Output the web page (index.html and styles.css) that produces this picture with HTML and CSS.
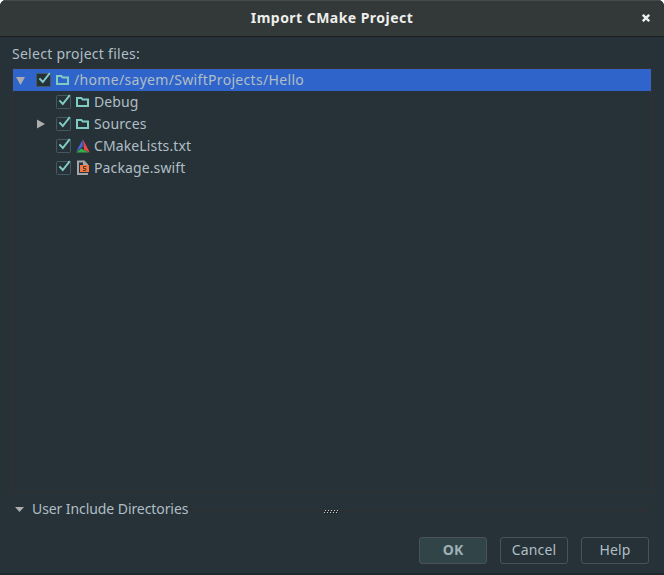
FILE: index.html
```html
<!DOCTYPE html>
<html lang="en">
<head>
<meta charset="utf-8">
<title>Import CMake Project</title>
<link rel="stylesheet" href="styles.css">
</head>
<body>
<svg class="defs" width="0" height="0">
  <symbol id="check" viewBox="0 0 16 16">
    <rect class="box" x="0.5" y="1.5" width="14" height="13" rx="1"/>
    <path class="tick" d="M3.4 6.4 L6.8 10 L13.8 1.2"/>
  </symbol>
  <symbol id="folder" viewBox="0 0 14 12">
    <path class="folder-line" d="M1 2 H5.4 L6.6 3.5 H12 V10 H1 Z"/>
  </symbol>
</svg>
<div class="dialog">
  <header class="titlebar">
    <h1 class="title">Import CMake Project</h1>
    <svg class="close" width="8" height="8" viewBox="0 0 8 8"><path d="M0.8 0.8 L7.2 7.2 M7.2 0.8 L0.8 7.2"/></svg>
  </header>
  <main class="content">
    <p class="label">Select project files:</p>
    <ul class="tree">
      <li class="row selected">
        <svg class="arrow" width="10" height="9" viewBox="0 0 10 9"><path d="M0 1 H9 L4.5 9 Z"/></svg>
        <svg class="check" width="16" height="16"><use href="#check"/></svg>
        <svg class="icon" width="14" height="12"><use href="#folder"/></svg>
        <span class="name root-name">/home/sayem/SwiftProjects/Hello</span>
      </li>
      <li class="row child">
        <span class="arrow-space"></span>
        <svg class="check" width="16" height="16"><use href="#check"/></svg>
        <svg class="icon" width="14" height="12"><use href="#folder"/></svg>
        <span class="name">Debug</span>
      </li>
      <li class="row child">
        <svg class="arrow" width="10" height="10" viewBox="0 0 10 10"><path d="M1 0.5 L9 5 L1 9.5 Z"/></svg>
        <svg class="check" width="16" height="16"><use href="#check"/></svg>
        <svg class="icon" width="14" height="12"><use href="#folder"/></svg>
        <span class="name">Sources</span>
      </li>
      <li class="row child">
        <span class="arrow-space"></span>
        <svg class="check" width="16" height="16"><use href="#check"/></svg>
        <svg class="icon" width="14" height="14" viewBox="0 0 14 14">
          <path fill="#4d63d5" d="M6.6 0.4 L0.2 12.8 L6.9 7.6 Z"/>
          <path fill="#e8484e" d="M7 0.4 L13.8 13.6 L8 10.8 Z"/>
          <path fill="#36ae45" d="M0.2 13.6 L5.2 9.6 L13 13.6 Z"/>
        </svg>
        <span class="name">CMakeLists.txt</span>
      </li>
      <li class="row child">
        <span class="arrow-space"></span>
        <svg class="check" width="16" height="16"><use href="#check"/></svg>
        <svg class="icon" width="14" height="16" viewBox="0 0 14 16">
          <path fill="none" stroke="#a3a6a7" stroke-width="2" d="M2 15 V1.5 H8 M1 14 H12"/>
          <path fill="#a3a6a7" d="M7 0.5 H8.5 L12 4.2 V5 H7 Z"/>
          <rect fill="#f57842" x="4" y="5" width="9" height="7"/>
          <path fill="none" stroke="#4f3a32" d="M10.2 6.5 H7.5 V8.5 H9.7 V10.5 H7"/>
        </svg>
        <span class="name">Package.swift</span>
      </li>
    </ul>
    <section class="include">
      <svg class="include-arrow" width="9" height="5" viewBox="0 0 9 5"><path d="M0 0 H9 L4.5 5 Z"/></svg>
      <span class="include-label">User Include Directories</span>
      <span class="rule"></span>
      <svg class="grip" width="16" height="5" viewBox="0 0 16 5" shape-rendering="crispEdges">
        <path stroke="#c9cccd" stroke-dasharray="1 2" d="M1 0.5 H15"/>
        <path stroke="#c9cccd" stroke-dasharray="1 2" d="M0 2.5 H14"/>
        <path stroke="#15191c" stroke-dasharray="1 2" d="M2 1.5 H15 M1 3.5 H15"/>
      </svg>
    </section>
    <footer class="actions">
      <button class="button primary">OK</button>
      <button class="button">Cancel</button>
      <button class="button">Help</button>
    </footer>
  </main>
</div>
</body>
</html>
```

FILE: styles.css
```css
* { box-sizing: border-box; }
body {
  margin: 0;
  background: #fff;
  font: 14px/22px "Noto Sans", sans-serif;
  color: #b0bec5;
}
.defs { display: block; }
.dialog {
  width: 664px;
  height: 575px;
  display: flex;
  flex-direction: column;
  overflow: hidden;
  border-radius: 6px 6px 0 0;
  background: #263238;
  border-bottom: 2px solid #1d282f;
}
.titlebar {
  height: 37px;
  display: grid;
  grid-template-columns: 36px 1fr 36px;
  align-items: center;
  background: #333838;
  border-top: 1px solid #454a4a;
  border-bottom: 1px solid #1b1f1f;
}
.title {
  grid-column: 2;
  margin: 0 0 2px;
  text-align: center;
  font-size: 14px;
  line-height: 20px;
  font-weight: 700;
  letter-spacing: 0.46px;
  color: #eeeeec;
}
.close { justify-self: center; margin-bottom: 1px; fill: none; stroke: #eeeeec; stroke-width: 2.4; }
.content { flex: 1; display: flex; flex-direction: column; padding: 6px 12px 0; }
.label { margin: 0 0 3px; letter-spacing: 0.27px; }
.tree {
  height: 425px;
  margin: 0;
  padding: 0;
  list-style: none;
  border: 1px solid #362f30;
}
.row { height: 22px; display: flex; align-items: center; padding-left: 3px; }
.child { padding-left: 23px; }
.selected { background: #2f65ca; }
.arrow { fill: #adadad; margin-right: 10px; }
.arrow-space { width: 20px; }
.check { margin-right: 4px; }
.box { fill: #263238; stroke: #435a62; }
.selected .box { stroke: #3a474e; }
.tick { fill: none; stroke: #80cbc4; stroke-width: 2; }
.icon { margin-right: 4px; }
.folder-line { fill: none; stroke: #80cbc4; stroke-width: 2; }
.name { white-space: nowrap; letter-spacing: 0.12px; }
.root-name { letter-spacing: 0.32px; }
.include { position: relative; height: 34px; display: flex; align-items: center; padding-left: 3px; }
.include-arrow { fill: #adadad; margin: -1px 8px 0 0; }
.include-label { margin-top: -2px; white-space: nowrap; letter-spacing: -0.08px; }
.rule { flex: 1; height: 1px; margin: 1px 5px 0 8px; background: #362f30; }
.grip { position: absolute; left: 312px; top: 17px; }
.actions { display: flex; justify-content: flex-end; gap: 13px; padding: 10px 3px 0 0; }
.button {
  width: 68px;
  height: 27px;
  padding: 0 0 2px;
  border: 1px solid #4b5358;
  border-radius: 3px;
  background: transparent;
  color: inherit;
  font: 14px/22px "Noto Sans", sans-serif;
  letter-spacing: 0.15px;
}
.primary { background: #314549; font-weight: 700; color: #9fafb7; }
```
